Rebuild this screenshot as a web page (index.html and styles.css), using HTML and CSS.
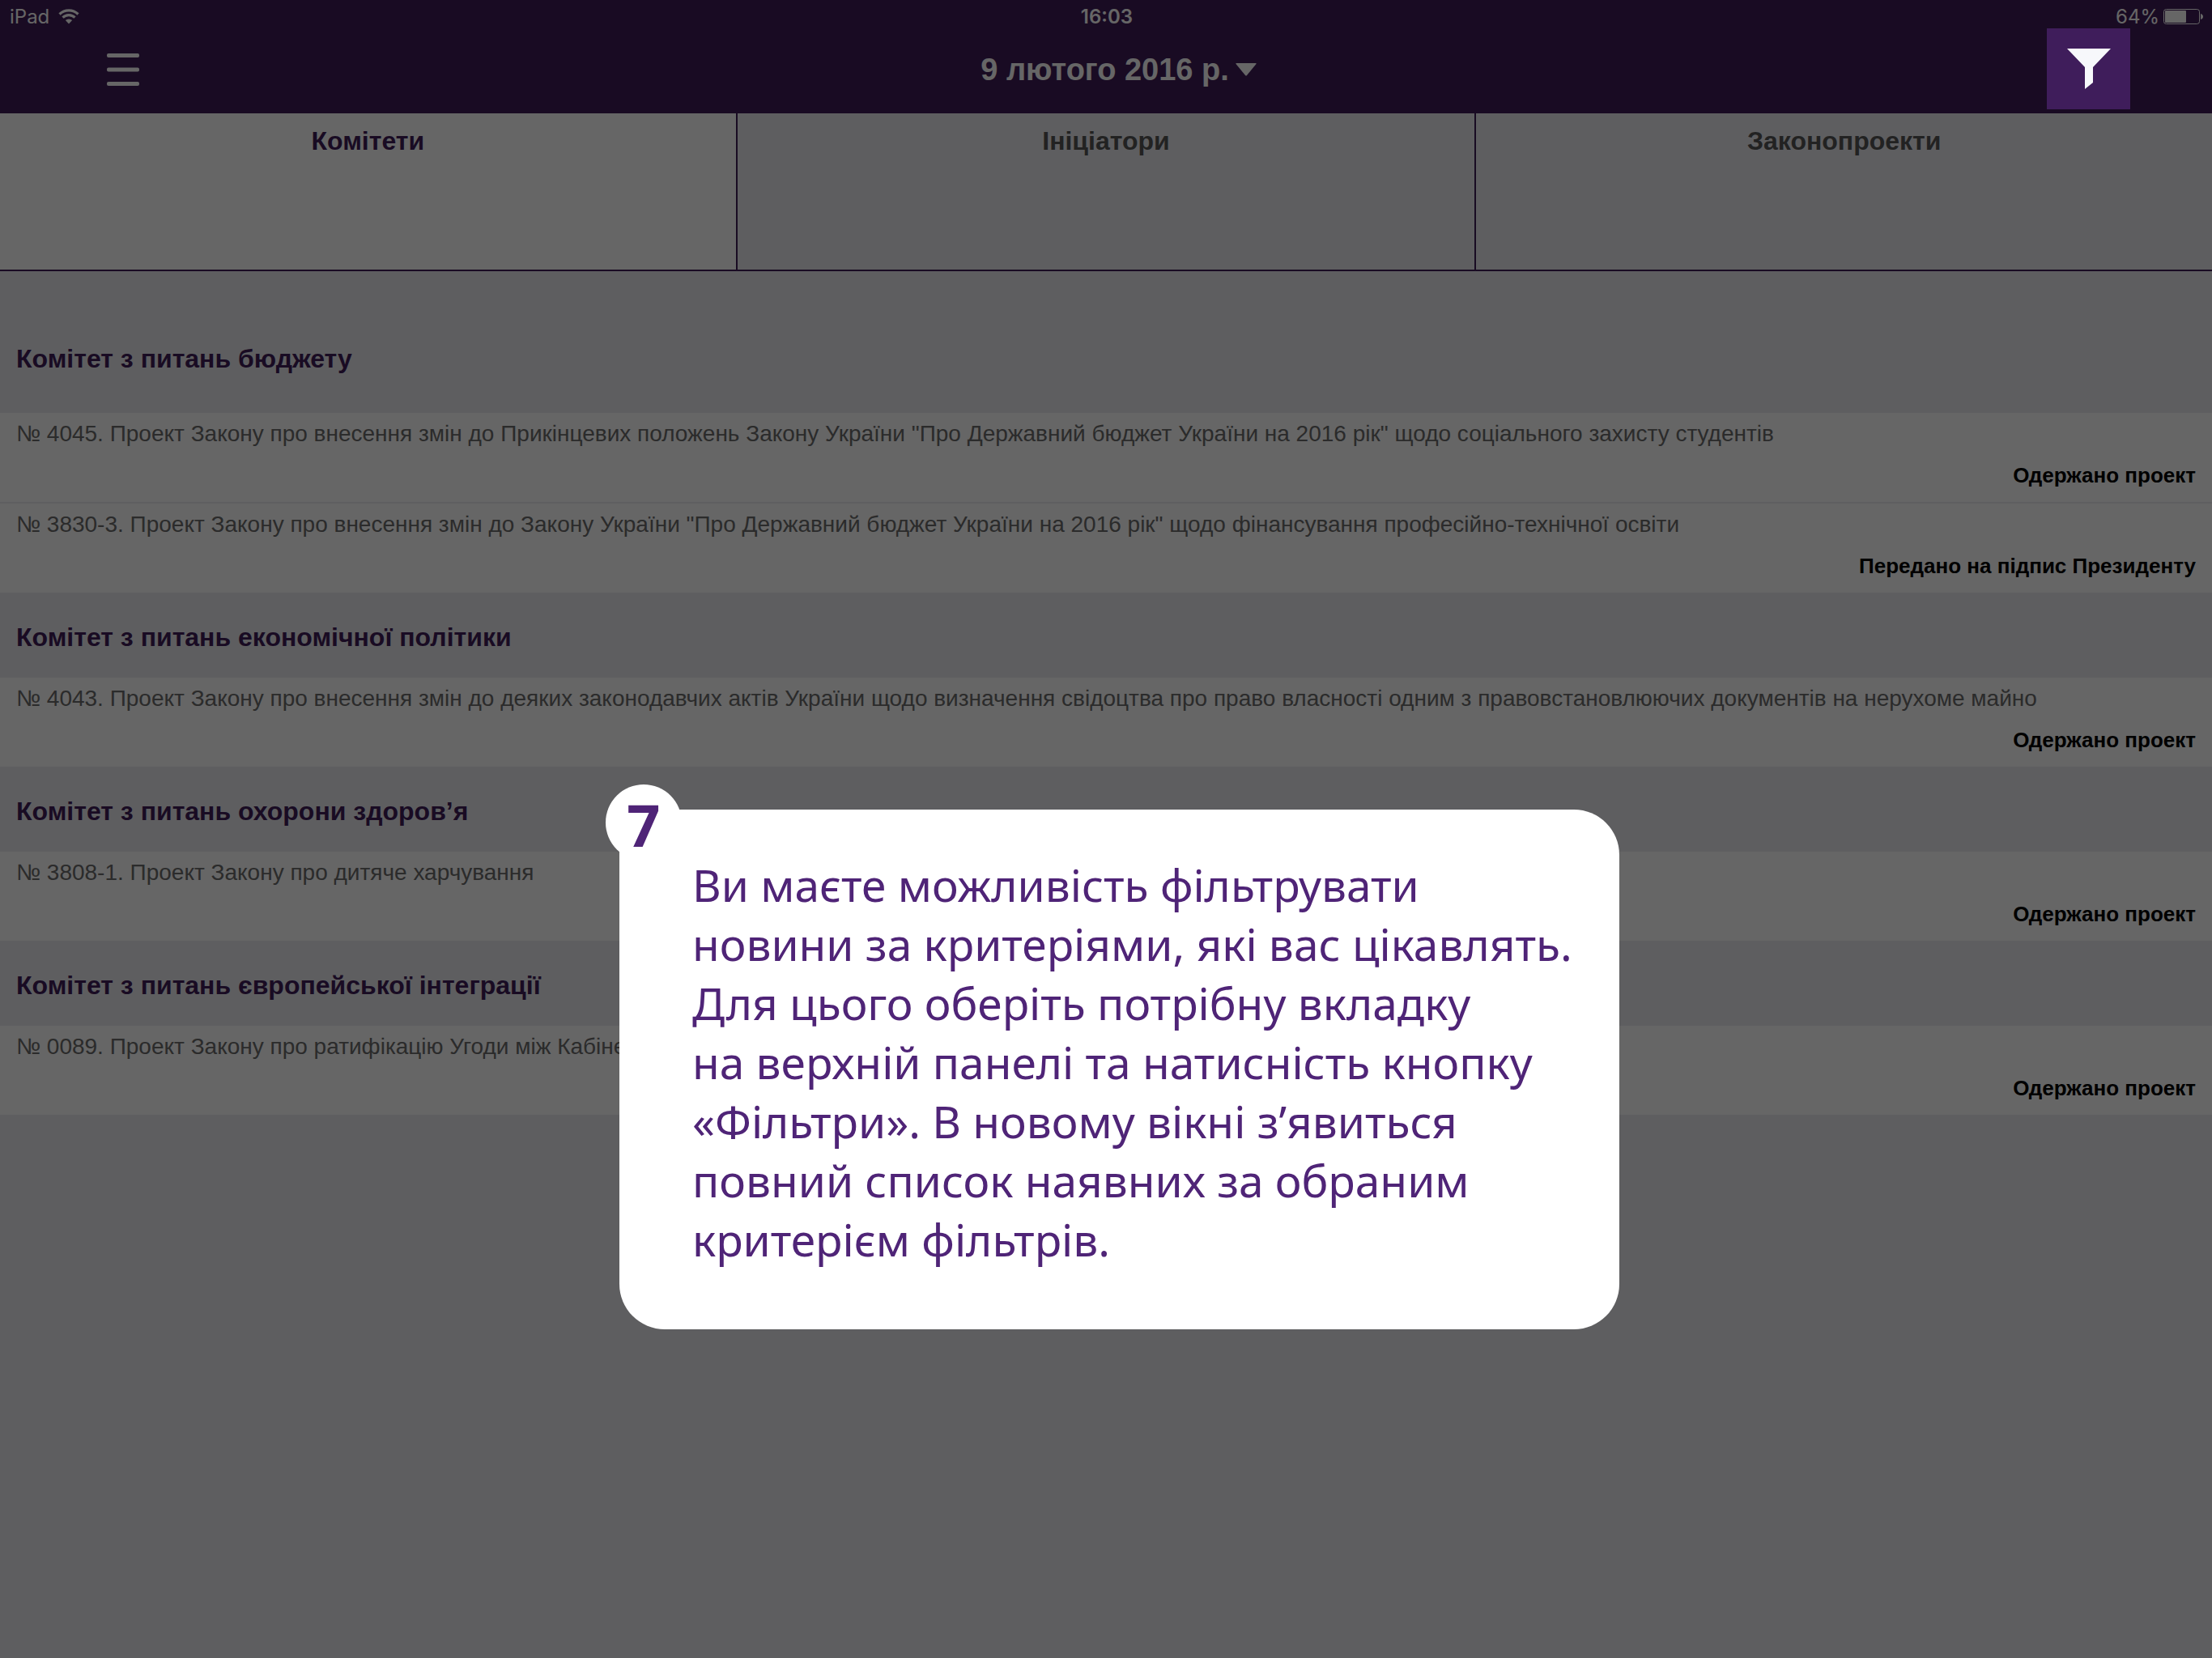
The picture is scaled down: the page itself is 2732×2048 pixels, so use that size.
FILE: index.html
```html
<!DOCTYPE html>
<html lang="uk">
<head>
<meta charset="utf-8">
<meta name="viewport" content="width=device-width, initial-scale=1">
<title>Комітети</title>
<link rel="stylesheet" href="styles.css">
</head>
<body>
<header class="header">
  <div class="status-bar">
    <div class="status-left">
      <span>iPad</span>
      <svg class="wifi" viewBox="0 0 26 19" aria-hidden="true">
        <path d="M1.5 6.5a16.5 16.5 0 0 1 23 0M5.5 10.700a10.700 10.700 0 0 1 15 0" fill="none" stroke="currentColor" stroke-width="3.200"/>
        <path d="M13 18.500l-4.200-4.400a6 6 0 0 1 8.400 0z" fill="currentColor"/>
      </svg>
    </div>
    <time class="clock">16:03</time>
    <div class="status-right">
      <span>64%</span>
      <svg class="battery" viewBox="0 0 50 19" aria-hidden="true">
        <rect x=".5" y=".5" width="44" height="18" rx="3" fill="none" stroke="currentColor"/>
        <rect x="2" y="2" width="26" height="15" rx="1" fill="currentColor"/>
        <path d="M46 6q3 1 3 3.500t-3 3.500z" fill="currentColor"/>
      </svg>
    </div>
  </div>
  <nav class="nav">
    <button class="menu-button" type="button" aria-label="Меню">
      <svg viewBox="0 0 40 40" aria-hidden="true"><g fill="currentColor"><rect width="40" height="5" rx="2"/><rect y="17.500" width="40" height="5" rx="2"/><rect y="35" width="40" height="5" rx="2"/></g></svg>
    </button>
    <button class="date-button" type="button">
      <span>9 лютого 2016 р.</span>
      <svg viewBox="0 0 26 16" aria-hidden="true"><path d="M1 0h24q1 0 .5 1L14 15q-1 1-2 0L.5 1Q0 0 1 0z" fill="currentColor"/></svg>
    </button>
    <button class="filter-button" type="button" aria-label="Фільтри">
      <svg viewBox="0 0 54 50" aria-hidden="true"><path d="M0 0h54L32 23v19l-10 8V23z" fill="currentColor"/></svg>
    </button>
  </nav>
</header>

<div class="tabs" role="tablist">
  <button class="tab tab-active" type="button" role="tab" aria-selected="true">Комітети</button>
  <button class="tab" type="button" role="tab" aria-selected="false">Ініціатори</button>
  <button class="tab" type="button" role="tab" aria-selected="false">Законопроекти</button>
</div>

<main class="list">
  <section>
    <h2 class="group-title group-title-first">Комітет з питань бюджету</h2>
    <article class="bill">
      <p class="bill-name">№ 4045. Проект Закону про внесення змін до Прикінцевих положень Закону України "Про Державний бюджет України на 2016 рік" щодо соціального захисту студентів</p>
      <p class="bill-status">Одержано проект</p>
    </article>
    <article class="bill">
      <p class="bill-name">№ 3830-3. Проект Закону про внесення змін до Закону України "Про Державний бюджет України на 2016 рік" щодо фінансування професійно-технічної освіти</p>
      <p class="bill-status">Передано на підпис Президенту</p>
    </article>
  </section>
  <section>
    <h2 class="group-title">Комітет з питань економічної політики</h2>
    <article class="bill">
      <p class="bill-name">№ 4043. Проект Закону про внесення змін до деяких законодавчих актів України щодо визначення свідоцтва про право власності одним з правовстановлюючих документів на нерухоме майно</p>
      <p class="bill-status">Одержано проект</p>
    </article>
  </section>
  <section>
    <h2 class="group-title">Комітет з питань охорони здоров’я</h2>
    <article class="bill">
      <p class="bill-name">№ 3808-1. Проект Закону про дитяче харчування</p>
      <p class="bill-status">Одержано проект</p>
    </article>
  </section>
  <section>
    <h2 class="group-title">Комітет з питань європейської інтеграції</h2>
    <article class="bill">
      <p class="bill-name">№ 0089. Проект Закону про ратифікацію Угоди між Кабінетом</p>
      <p class="bill-status">Одержано проект</p>
    </article>
  </section>
</main>

<div class="shade"></div>
<aside class="hint" role="dialog" aria-label="Підказка 7">
  <span class="hint-number">7</span>
  <p class="hint-text">Ви маєте можливість фільтрувати<br>новини за критеріями, які вас цікавлять.<br>Для цього оберіть потрібну вкладку<br>на верхній панелі та натисність кнопку<br>«Фільтри». В новому вікні з’явиться<br>повний список наявних за обраним<br>критерієм фільтрів.</p>
</aside>
</body>
</html>
```
FILE: styles.css
```css
* {
  box-sizing: border-box;
}

body {
  position: relative;
  min-height: 100vh;
  margin: 0;
  background: #ebebf0;
  color: #6b6b6b;
  font-family: "Liberation Sans", Arial, sans-serif;
}

h2,
p {
  margin: 0;
}

button {
  margin: 0;
  padding: 0;
  border: 0;
  background: none;
  color: inherit;
  font: inherit;
}

svg {
  display: block;
}

.header {
  background: #3f1d59;
  color: #fff;
}

.status-bar {
  display: grid;
  grid-template-columns: 1fr auto 1fr;
  height: 35px;
  padding: 6px 10px 0 12px;
  font-family: Inter, sans-serif;
  font-size: 24px;
  line-height: 29px;
}

.status-left,
.status-right {
  display: flex;
  align-items: center;
  gap: 11px;
}

.status-right {
  justify-content: flex-end;
  gap: 5px;
}

.clock {
  font-weight: 600;
}

.wifi {
  width: 26px;
  height: 19px;
}

.battery {
  width: 50px;
  height: 19px;
}

.nav {
  display: grid;
  grid-template-columns: 1fr auto 1fr;
  align-items: center;
  height: 105px;
  padding: 0 101px 3px 132px;
}

.menu-button svg {
  width: 40px;
  height: 40px;
}

.date-button {
  display: flex;
  align-items: center;
  gap: 8px;
  font-size: 38px;
  font-weight: bold;
  line-height: 44px;
}

.date-button svg {
  width: 26px;
  height: 16px;
}

.filter-button {
  position: relative;
  z-index: 2;
  display: grid;
  place-items: center;
  align-self: start;
  justify-self: end;
  width: 103px;
  height: 100px;
  background: #3f1d5b;
  color: #f7f8fb;
}

.filter-button svg {
  width: 54px;
  height: 50px;
}

.tabs {
  display: grid;
  grid-template-columns: repeat(3, 1fr);
  height: 195px;
  border-bottom: 2px solid #3f1d59;
}

.tab {
  display: flex;
  justify-content: center;
  padding-top: 16px;
  color: #565656;
  font-size: 32px;
  font-weight: bold;
  line-height: 36px;
}

.tab:last-child {
  border-left: 2px solid #3f1d59;
}

.tab-active {
  border-right: 2px solid #3f1d59;
  background: #fff;
  color: #3f1d59;
}

.group-title {
  padding: 35px 20px 32px;
  color: #3f1d59;
  font-size: 32px;
  line-height: 36px;
}

.group-title-first {
  padding-top: 90px;
  padding-bottom: 49px;
}

.bill {
  padding: 9px 20px 17px;
  border-bottom: 2px solid #ebebf0;
  background: #fff;
}

.bill-name {
  font-size: 28px;
  line-height: 34px;
}

.bill-status {
  padding-top: 18px;
  color: #000;
  font-size: 26px;
  font-weight: bold;
  line-height: 32px;
  text-align: right;
}

.shade {
  position: absolute;
  inset: 0;
  z-index: 1;
  background: rgba(0, 0, 0, 0.6);
}

.hint {
  position: absolute;
  top: 1000px;
  left: 28%;
  z-index: 3;
  width: 45.2%;
  padding: 56px 60px 75px 90px;
  border-radius: 0 56px 56px 56px;
  background: #fff;
  color: #4f2477;
}

.hint-number {
  position: absolute;
  top: -31px;
  left: -17px;
  width: 94px;
  height: 94px;
  border-radius: 50%;
  background: #fff;
  font-family: "Noto Sans", sans-serif;
  font-size: 72px;
  font-weight: bold;
  line-height: 98px;
  text-align: center;
}

.hint-text {
  font-family: "Noto Sans", sans-serif;
  font-size: 55px;
  line-height: 73px;
  white-space: nowrap;
}
```
